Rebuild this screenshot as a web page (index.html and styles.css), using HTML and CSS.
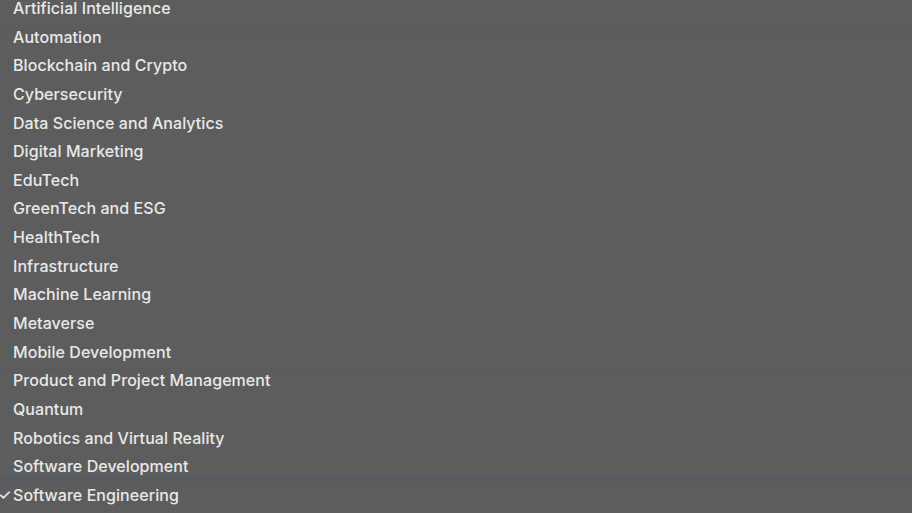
FILE: index.html
```html
<!DOCTYPE html>
<html lang="en">
<head>
<meta charset="utf-8">
<title>Category menu</title>
<link rel="stylesheet" href="styles.css">
</head>
<body>
<div class="menu">
  <ul class="list">
    <li class="item">Artificial Intelligence</li>
    <li class="item">Automation</li>
    <li class="item">Blockchain and Crypto</li>
    <li class="item">Cybersecurity</li>
    <li class="item">Data Science and Analytics</li>
    <li class="item">Digital Marketing</li>
    <li class="item">EduTech</li>
    <li class="item">GreenTech and ESG</li>
    <li class="item">HealthTech</li>
    <li class="item">Infrastructure</li>
    <li class="item">Machine Learning</li>
    <li class="item">Metaverse</li>
    <li class="item">Mobile Development</li>
    <li class="item">Product and Project Management</li>
    <li class="item">Quantum</li>
    <li class="item">Robotics and Virtual Reality</li>
    <li class="item">Software Development</li>
    <li class="item selected"><span class="check">✓</span>Software Engineering</li>
  </ul>
</div>
</body>
</html>
```

FILE: styles.css
```css
html, body {
  margin: 0;
  padding: 0;
  height: 100%;
  overflow: hidden;
}
body {
  background-color: #5d5d5d;
  background-image:
    linear-gradient(to bottom,
      transparent 0px, transparent 28px,
      rgba(85,86,92,0.35) 30px, transparent 33px,
      transparent 368px, rgba(86,88,98,0.25) 370px, transparent 373px,
      transparent 476px, rgba(80,90,108,0.7) 479px, transparent 482px);
  font-family: Inter, "Noto Sans", sans-serif;
}
.menu {
  margin-top: -6px;
}
.list {
  list-style: none;
  margin: 0;
  padding: 0;
}
.item {
  position: relative;
  height: 28.65px;
  line-height: 28.65px;
  padding-left: 13px;
  font-size: 16px;
  font-weight: 500;
  color: #e9e9e9;
  letter-spacing: 0.06px;
  white-space: nowrap;
}
.check {
  position: absolute;
  left: -2px;
  top: 0;
  font-size: 15px;
  color: #e9e9e9;
}
```
